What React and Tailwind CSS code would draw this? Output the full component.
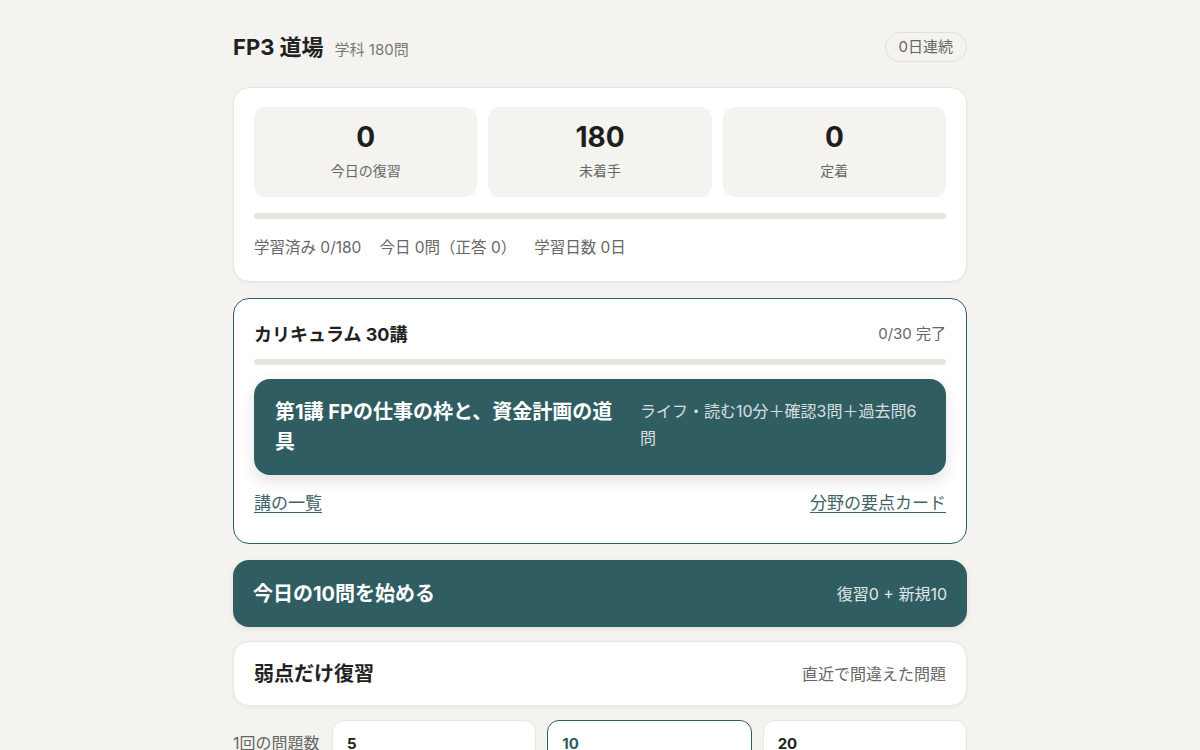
export default function App() {
  const font = { fontFamily: '"Inter", "Noto Sans CJK JP", sans-serif' };
  return (
    <div className="min-h-[750px] bg-[#f4f3ef] text-[#222]" style={font}>
      <div className="mx-auto w-[734px] pt-[32px] pb-10">
        {/* Header */}
        <div className="flex items-center justify-between h-[30px]">
          <div className="flex items-baseline gap-[11px]">
            <h1 className="text-[22px] font-bold text-[#222]">FP3 道場</h1>
            <span className="text-[15px] text-[#777]">学科 180問</span>
          </div>
          <span className="h-[30px] px-[13px] rounded-full border border-[#e2e0da] flex items-center text-[15px] text-[#666]">0日連続</span>
        </div>

        {/* Stats card */}
        <div className="mt-[25px] bg-white rounded-[16px] border border-[#e8e6e0] shadow-[0_1px_3px_rgba(0,0,0,0.05)] px-5 pt-[19px] pb-[22px]">
          <div className="grid grid-cols-3 gap-[11px]">
            {[
              ["0", "今日の復習"],
              ["180", "未着手"],
              ["0", "定着"],
            ].map(([n, l]) => (
              <div key={l} className="h-[90px] rounded-[12px] bg-[#f4f3ef] flex flex-col items-center justify-center">
                <div className="text-[28px] font-bold leading-none text-[#1e1e1e]">{n}</div>
                <div className="mt-[10px] text-[14px] leading-[20px] text-[#666]">{l}</div>
              </div>
            ))}
          </div>
          <div className="mt-[16px] h-[6px] rounded-full bg-[#e5e4de]" />
          <div className="mt-[18px] text-[15.5px] leading-[22px] text-[#666] flex gap-[18px]">
            <span>学習済み 0/180</span>
            <span>今日 0問（正答 0）</span>
            <span>学習日数 0日</span>
          </div>
        </div>

        {/* Curriculum card */}
        <div className="mt-[16px] bg-white rounded-[16px] border border-[#2f5d62] px-5 pt-[22px] pb-[28px]">
          <div className="flex items-center justify-between h-[26px]">
            <h2 className="text-[18px] font-bold text-[#222]">カリキュラム 30講</h2>
            <span className="text-[15px] text-[#666]">0/30 完了</span>
          </div>
          <div className="mt-[12px] h-[6px] rounded-full bg-[#e5e4de]" />
          <div className="mt-[14px] rounded-[16px] bg-[#2f5d62] px-[21px] py-[18px] flex items-start gap-[15px] shadow-[0_6px_16px_rgba(0,0,0,0.12)]">
            <div className="w-[350px] text-[20px] font-bold text-white leading-[30px]">第1講 FPの仕事の枠と、資金計画の道具</div>
            <div className="w-[285px] text-[16px] text-white/80 leading-[27px] pt-[1px]">ライフ・読む10分＋確認3問＋過去問6問</div>
          </div>
          <div className="mt-[16px] flex items-center justify-between text-[17px] leading-[24px] text-[#3f6468]">
            <a className="underline underline-offset-[3px]" href="#">講の一覧</a>
            <a className="underline underline-offset-[3px]" href="#">分野の要点カード</a>
          </div>
        </div>

        {/* Start button */}
        <button className="mt-[16px] w-full h-[67px] rounded-[16px] bg-[#2f5d62] px-5 flex items-center justify-between shadow-[0_2px_6px_rgba(0,0,0,0.08)]">
          <span className="text-[20px] font-bold text-white">今日の10問を始める</span>
          <span className="text-[16px] text-white/85">復習0 + 新規10</span>
        </button>

        {/* Weak card */}
        <div className="mt-[14px] h-[65px] bg-white rounded-[16px] border border-[#e8e6e0] shadow-[0_1px_4px_rgba(0,0,0,0.06)] px-5 flex items-center justify-between">
          <span className="text-[20px] font-bold text-[#222]">弱点だけ復習</span>
          <span className="text-[16px] text-[#666]">直近で間違えた問題</span>
        </div>

        {/* Count selector */}
        <div className="mt-[14px] flex items-start gap-[12px]">
          <span className="w-[87px] pt-[11px] text-[16px] leading-[24px] text-[#666] whitespace-nowrap">1回の問題数</span>
          <div className="flex-1 grid grid-cols-3 gap-[11px]">
            <div className="h-[50px] rounded-[12px] bg-white border border-[#e8e6e0] px-[14px] pt-[12px] text-[15px] leading-[22px] font-bold text-[#222]">5</div>
            <div className="h-[50px] rounded-[12px] bg-white border border-[#2f5d62] px-[14px] pt-[12px] text-[15px] leading-[22px] font-bold text-[#2f5d62]">10</div>
            <div className="h-[50px] rounded-[12px] bg-white border border-[#e8e6e0] px-[14px] pt-[12px] text-[15px] leading-[22px] font-bold text-[#222]">20</div>
          </div>
        </div>
      </div>
    </div>
  );
}
